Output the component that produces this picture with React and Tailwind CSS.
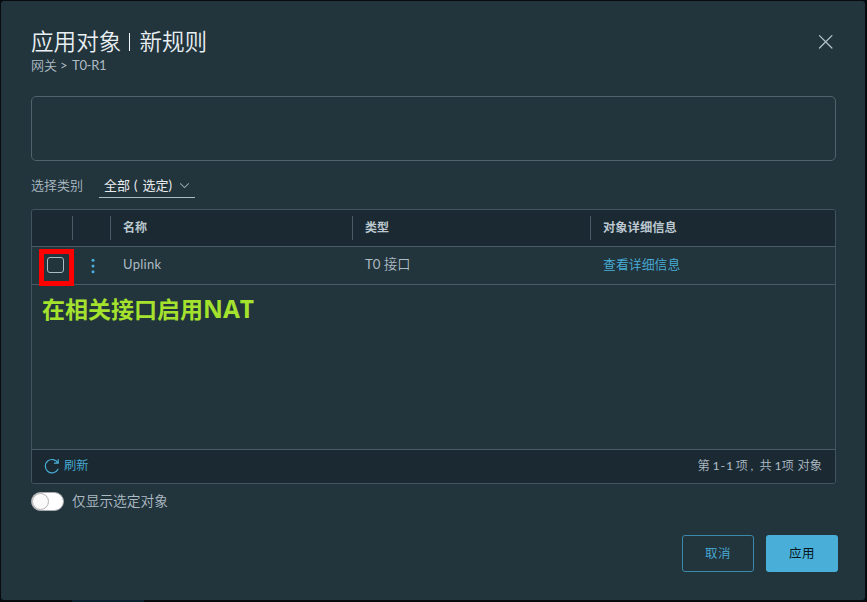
const cjk = "font-['Lato','Noto_Sans_CJK_SC',sans-serif]";

function Divider() {
  return <span className="h-6 w-px shrink-0 bg-[#495b67]" />;
}

function Header() {
  return (
    <header className="flex h-[94px] items-start justify-between pl-[30px] pr-[31px] pt-[26px]">
      <div>
        <h1 className="flex h-[29px] items-center whitespace-pre text-[22.6px] font-[350] leading-[29px] text-[#e9f0f3]">
          <span>应用对象</span>
          <span className="ml-[8px] mr-[9px] h-[18px] w-px bg-[#f4f8fa]" />
          <span>新规则</span>
        </h1>
        <p className="flex h-[18px] items-center whitespace-pre text-[13px] font-[350] leading-[18px] text-[#adbbc4]">
          <span className="w-[29px]">网关</span>
          <span className="w-[12px] font-normal">&gt;</span>
          <span className="font-normal tracking-[-0.3px]">T0-R1</span>
        </p>
      </div>
      <button className="mt-[7px]" aria-label="关闭">
        <svg width="16" height="16" viewBox="0 0 16 16" fill="none" stroke="#b4c3cc" strokeWidth="1.3" strokeLinecap="round">
          <path d="M1.5 1.6 13.9 14M13.9 1.6 1.5 14" />
        </svg>
      </button>
    </header>
  );
}

function CategoryFilter() {
  return (
    <div className="flex h-[48px] items-start pt-[13px] text-[13px] leading-[23px]">
      <span className="w-[68px] shrink-0 font-[350] text-[#adbbc4]">选择类别</span>
      <button className="flex h-[24px] w-[96px] items-center border-b border-[#adbbc4] pl-[5px] text-[#e9ecef]">
        <span className="flex w-[70px] whitespace-pre">
          <span>全部</span>
          <span className="pl-[4px]">(</span>
          <span className="pl-[5px]">选定</span>
          <span>)</span>
        </span>
        <svg className="ml-[5px]" width="11" height="8" viewBox="0 0 11 8" fill="none" stroke="#94a3ab" strokeWidth="1.1">
          <path d="M1.2 1.4 5.5 5.6 9.8 1.4" />
        </svg>
      </button>
    </div>
  );
}

function Grid() {
  return (
    <section className="flex h-[275px] flex-col overflow-hidden rounded-[3px] border border-[#42545f]">
      <div className="flex h-[37px] shrink-0 items-center border-b border-[#495b67] bg-[#1b2a32] text-[12px] font-bold text-[#bcc8d0]">
        <div className="w-[40px]" />
        <Divider />
        <div className="w-[37px]" />
        <Divider />
        <div className="w-[241px] pb-px pl-[12px]">名称</div>
        <Divider />
        <div className="w-[237px] pb-px pl-[12px]">类型</div>
        <Divider />
        <div className="flex-1 pl-[12px] text-[12.3px]">对象详细信息</div>
      </div>
      <div className="flex h-[38px] shrink-0 items-center border-b border-[#495b67] text-[13px] text-[#adbbc4]">
        <div className="flex w-[48px] pl-[7px] pt-[3px]">
          <span className="-mb-px flex h-[37px] w-[35px] shrink-0 items-start justify-center border-[5px] border-[#fe0000] pt-[3px]">
            <span className="mr-[3px] h-[16px] w-[17px] rounded-[3px] border border-[#adbbc4]" />
          </span>
        </div>
        <div className="flex w-[43px] pl-[11px]">
          <svg width="4" height="16" viewBox="0 0 4 16" fill="#49afd9">
            <circle cx="2" cy="2.3" r="1.5" />
            <circle cx="2" cy="8" r="1.5" />
            <circle cx="2" cy="13.7" r="1.5" />
          </svg>
        </div>
        <div className="w-[242px] pb-px tracking-[0.3px]">Uplink</div>
        <div className="w-[238px] whitespace-pre pb-px text-[13.2px] font-[350]">
          <span className="font-normal">T0</span> 接口
        </div>
        <a className="pb-px text-[12.9px] font-[350] text-[#49afd9]">查看详细信息</a>
      </div>
      <div className="flex-1 pl-[10px] pt-[7px] font-['Open_Sans','Noto_Sans_CJK_SC',sans-serif] text-[23px] font-bold leading-[34px] text-[#a5e22e]">
        在相关接口启用<span className="text-[24.5px]">NAT</span>
      </div>
      <div className="flex h-[34px] shrink-0 items-center justify-between border-t border-[#495b67] bg-[#1b2a32] pl-[12px] pr-[13px] text-[12.3px]">
        <button className="flex items-center gap-[5px] font-[350] text-[#49afd9]">
          <svg className="-mt-px" width="16" height="16" viewBox="0 0 16 16" fill="none" stroke="#49afd9" strokeWidth="1.2" strokeLinecap="round" strokeLinejoin="round">
            <path d="M14.2 1.5v3.7h-3.7M13.9 5A6.7 6.7 0 1 0 14 11.2" />
          </svg>
          <span className="-ml-px">刷新</span>
        </button>
        <span className="flex whitespace-pre font-[350] text-[#adbbc4]">
          <span className="w-[15px]">第</span>
          <span className="w-[23px] font-normal tracking-[1px]">1-1</span>
          <span className="w-[15px]">项</span>
          <span className="w-[9px] font-normal">,</span>
          <span className="w-[15px]">共</span>
          <span className="w-[7px] font-normal">1</span>
          <span className="w-[16px]">项</span>
          <span>对象</span>
        </span>
      </div>
    </section>
  );
}

export default function App() {
  return (
    <div className={`h-[602px] w-[867px] overflow-hidden bg-[#070b0f] pl-px pt-px ${cjk}`}>
      <main className="h-[599px] w-[864px] rounded-[3px] bg-[#22343c]">
        <Header />
        <div className="pl-[30px] pr-[29px] pt-px">
          <div className="h-[65px] rounded-[5px] border border-[#50636c]" />
          <CategoryFilter />
          <Grid />
          <label className="flex h-[35px] items-center gap-[8px] text-[13.7px] font-[350] text-[#adbbc4]">
            <span className="flex h-[19px] w-[33px] rounded-full border border-[#a9acae] bg-white">
              <span className="h-[17px] w-[17px] rounded-full border border-[#b0b0b0] bg-[#fafafa]" />
            </span>
            <span>仅显示选定对象</span>
          </label>
        </div>
        <footer className="flex justify-end gap-[12px] pr-[27px] pt-[16px] text-[12.5px] tracking-[0.5px]">
          <button className="h-[37px] w-[72px] rounded-[3px] border border-[#3a88ab] pt-[2px] font-[350] text-[#49afd9]">取消</button>
          <button className="h-[37px] w-[72px] rounded-[3px] bg-[#49afd9] pt-[2px] text-[#08151c]">应用</button>
        </footer>
      </main>
      <div className="ml-[71px] h-[2px] w-[72px] bg-[#0b2330]" />
    </div>
  );
}
